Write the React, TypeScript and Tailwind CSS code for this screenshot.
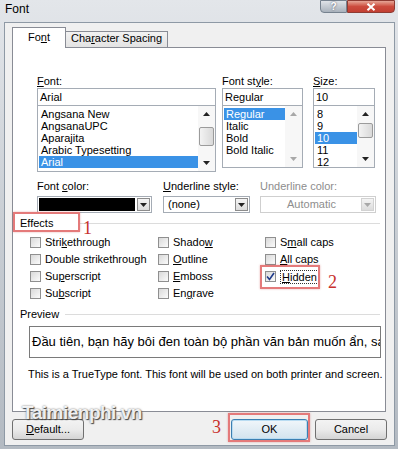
import React from "react";

const fontItems = ["Angsana New", "AngsanaUPC", "Aparajita", "Arabic Typesetting", "Arial"];
const styleItems = ["Regular", "Italic", "Bold", "Bold Italic"];
const sizeItems = ["8", "9", "10", "11", "12"];

function Tri({ up, gray }: { up?: boolean; gray?: boolean }) {
  return (
    <svg width="7" height="4" viewBox="0 0 7 4" className="block">
      <path d={up ? "M0 4 L3.5 0 L7 4 Z" : "M0 0 L7 0 L3.5 4 Z"} fill={gray ? "#a8a8a8" : "#222"} />
    </svg>
  );
}

function ScrollBar({ thumb, faded }: { thumb?: string; faded?: boolean }) {
  return (
    <div className="relative flex w-[17px] flex-col items-center justify-between bg-[#f7f7f7] py-[6px]">
      <Tri up gray={faded} />
      {thumb && (
        <div
          className={`absolute left-[1px] w-[15px] rounded-[2px] border border-[#9b9b9b] bg-gradient-to-r from-[#f3f3f3] to-[#d9d9d9] ${thumb}`}
        />
      )}
      <Tri gray={faded} />
    </div>
  );
}

function ListBox({
  items,
  selected,
  height,
  thumb,
  faded,
}: {
  items: React.ReactNode[];
  selected: number;
  height: string;
  thumb?: string;
  faded?: boolean;
}) {
  return (
    <div className={`flex border border-t-0 border-[#a5acb5] ${height}`}>
      <div className="flex-1 overflow-hidden pl-[1px] pt-[2px]">
        {items.map((it, i) => (
          <div
            key={i}
            className={`h-[12px] whitespace-nowrap px-[2px] leading-[12px] ${
              i === selected ? "bg-[#3a92e6] text-white" : ""
            }`}
          >
            {it}
          </div>
        ))}
      </div>
      <ScrollBar thumb={thumb} faded={faded} />
    </div>
  );
}

function DropBtn({ gray }: { gray?: boolean }) {
  return (
    <div
      className={`flex h-full w-[13px] items-center justify-center border bg-gradient-to-b from-[#f4f4f4] to-[#dcdcdc] ${
        gray ? "border-[#d2d2d2]" : "border-[#8c8c8c]"
      }`}
    >
      <Tri gray={gray} />
    </div>
  );
}

function Check({ label, checked }: { label: React.ReactNode; checked?: boolean }) {
  return (
    <div className="flex h-[17px] items-center">
      <div className="mr-[4px] flex h-[11px] w-[11px] items-center justify-center border border-[#8f8f8f] bg-gradient-to-br from-[#d9d9d9] to-[#fbfbfb]">
        {checked && (
          <svg width="9" height="9" viewBox="0 0 9 9">
            <path d="M1 4.5 L3.5 7.5 L8 1" fill="none" stroke="#1f3a8a" strokeWidth="1.6" />
          </svg>
        )}
      </div>
      {label}
    </div>
  );
}

function Btn({ children, w, focus }: { children: React.ReactNode; w: string; focus?: boolean }) {
  return (
    <div
      className={`flex h-[21px] items-center justify-center rounded-[3px] border bg-gradient-to-b ${w} ${
        focus
          ? "border-[#3c7fb1] from-[#f0f6fa] to-[#d3e3ee] shadow-[inset_0_0_0_1px_#b9dcf2]"
          : "border-[#707070] from-[#f3f3f3] via-[#ebebeb] to-[#d4d4d4]"
      }`}
    >
      {children}
    </div>
  );
}

export default function App() {
  return (
    <div className="relative h-[449px] w-[398px] overflow-hidden bg-gradient-to-b from-[#e3e6ea] via-[#c9ced4] to-[#b3bac2] font-['Liberation_Sans',Arial,sans-serif] text-[11px] text-black">
      {/* title bar */}
      <div className="flex h-[22px] items-start justify-between">
        <div className="pl-[5px] pt-[2px] text-[12px] leading-[14px]">Font</div>
        <div className="mr-[3px] flex">
          <div className="flex h-[13px] w-[27px] items-center justify-center rounded-bl-[4px] border border-[#76828f] bg-gradient-to-b from-[#dfe3e8] to-[#a9b2bc] text-[10px] font-bold leading-none text-white [text-shadow:0_0_2px_#445]">
            ?
          </div>
          <div className="flex h-[13px] w-[48px] items-center justify-center rounded-br-[4px] border border-[#8d3b33] bg-gradient-to-b from-[#e5a597] via-[#cc4b3e] to-[#c23f32]">
            <svg width="10" height="8" viewBox="0 0 10 8">
              <path d="M1.5 0.8 L8.5 7.2 M8.5 0.8 L1.5 7.2" stroke="#fff" strokeWidth="2" />
            </svg>
          </div>
        </div>
      </div>

      {/* dialog body */}
      <div className="ml-[4px] mr-[3px] h-[424px] border border-[#8e99a5] bg-[#f0f0f0] px-[7px] pt-[5px]">
        {/* tabs */}
        <div className="flex h-[20px] items-end">
          <div className="relative z-10 flex h-[21px] w-[54px] items-center justify-center border border-b-0 border-[#898c95] bg-white pb-[2px]">
            Fo<span className="underline">n</span>t
          </div>
          <div className="flex h-[17px] w-[102px] items-center justify-center border border-l-0 border-[#898c95] bg-gradient-to-b from-[#f2f2f2] to-[#e3e3e3] pb-[2px]">
            Cha<span className="underline">r</span>acter Spacing
          </div>
        </div>

        {/* panel */}
        <div className="relative -mt-[1px] h-[365px] w-[374px] border border-[#898c95] bg-white">
          {/* font / style / size */}
          <div className="flex pl-[24px] pt-[27px]">
            <div className="mr-[6px] w-[179px]">
              <div className="h-[13px] leading-[13px]">
                <span className="underline">F</span>ont:
              </div>
              <div className="h-[18px] border border-[#a5acb5] px-[2px] leading-[16px]">Arial</div>
              <ListBox items={fontItems} selected={4} height="h-[66px]" thumb="top-[21px] h-[19px]" />
            </div>
            <div className="mr-[10px] w-[81px]">
              <div className="h-[13px] leading-[13px]">
                Font st<span className="underline">y</span>le:
              </div>
              <div className="h-[18px] border border-[#a5acb5] px-[2px] leading-[16px]">Regular</div>
              <ListBox items={styleItems} selected={0} height="h-[62px]" faded />
            </div>
            <div className="w-[62px]">
              <div className="h-[13px] leading-[13px]">
                <span className="underline">S</span>ize:
              </div>
              <div className="h-[18px] border border-[#a5acb5] px-[2px] leading-[16px]">10</div>
              <ListBox items={sizeItems} selected={2} height="h-[62px]" thumb="top-[17px] h-[15px]" />
            </div>
          </div>

          {/* colors */}
          <div className="flex pl-[24px] pt-[8px]">
            <div className="mr-[11px] w-[115px]">
              <div className="mb-[3px] h-[13px] leading-[13px]">
                Font <span className="underline">c</span>olor:
              </div>
              <div className="flex h-[17px] items-center border border-[#a5acb5] p-[1px]">
                <div className="mr-[2px] h-full flex-1 bg-black" />
                <DropBtn />
              </div>
            </div>
            <div className="mr-[10px] w-[87px]">
              <div className="mb-[3px] h-[13px] leading-[13px]">
                <span className="underline">U</span>nderline style:
              </div>
              <div className="flex h-[17px] items-center border border-[#a5acb5] p-[1px]">
                <div className="flex-1 pl-[3px] leading-[13px]">(none)</div>
                <DropBtn />
              </div>
            </div>
            <div className="w-[116px]">
              <div className="mb-[3px] h-[13px] leading-[13px] text-[#8d8d8d]">Underline color:</div>
              <div className="flex h-[17px] items-center border border-[#cfcfcf] p-[1px]">
                <div className="flex-1 text-center leading-[13px] text-[#8d8d8d]">Automatic</div>
                <DropBtn gray />
              </div>
            </div>
          </div>

          {/* effects */}
          <div className="mt-[3px] flex h-[14px] items-center pl-[7px] pr-[5px]">
            <span>Effects</span>
            <div className="ml-[26px] h-px flex-1 bg-[#dcdcdc]" />
          </div>
          <div className="mt-[4px] grid grid-cols-[128px_107px_1fr] pl-[17px]">
            <Check label={<span>Stri<span className="underline">k</span>ethrough</span>} />
            <Check label={<span>Shado<span className="underline">w</span></span>} />
            <Check label={<span>S<span className="underline">m</span>all caps</span>} />
            <Check label={<span>Double strikethrough</span>} />
            <Check label={<span><span className="underline">O</span>utline</span>} />
            <Check label={<span><span className="underline">A</span>ll caps</span>} />
            <Check label={<span>Su<span className="underline">p</span>erscript</span>} />
            <Check label={<span><span className="underline">E</span>mboss</span>} />
            <Check
              checked
              label={
                <span className="border border-dotted border-[#333] px-[1px] leading-[12px]">
                  <span className="underline">H</span>idden
                </span>
              }
            />
            <Check label={<span>Su<span className="underline">b</span>script</span>} />
            <Check label={<span>En<span className="underline">g</span>rave</span>} />
            <div />
          </div>

          {/* preview */}
          <div className="mt-[5px] flex h-[14px] items-center pl-[7px] pr-[5px]">
            <span>Preview</span>
            <div className="ml-[6px] h-px flex-1 bg-[#dcdcdc]" />
          </div>
          <div className="ml-[16px] mr-[4px] mt-[5px] h-[32px] overflow-hidden whitespace-nowrap border border-[#7a7a7a] pl-[2px] text-[13px] leading-[30px]">
            Đầu tiên, bạn hãy bôi đen toàn bộ phần văn bản muốn ẩn, sau đó
          </div>
          <div className="mt-[9px] h-[14px] whitespace-nowrap pl-[15px] pr-[4px] text-center leading-[14px]">
            This is a TrueType font. This font will be used on both printer and screen.
          </div>
        </div>

        {/* buttons */}
        <div className="mt-[7px] flex">
          <Btn w="w-[72px]">
            <span>
              <span className="underline">D</span>efault...
            </span>
          </Btn>
          <div className="flex-1" />
          <Btn w="w-[77px]" focus>
            OK
          </Btn>
          <div className="w-[7px]" />
          <Btn w="w-[72px]">Cancel</Btn>
        </div>
      </div>

      {/* watermark */}
      <div className="pointer-events-none absolute left-[22px] top-[403px] text-[19px] font-bold leading-none tracking-[-0.5px] text-white/90 [text-shadow:1px_1px_1px_#444,0_0_2px_#666]">
        Taimienphi.vn
      </div>

      {/* annotations */}
      <div className="pointer-events-none absolute left-[13px] top-[212px] h-[20px] w-[67px] border-2 border-[#e47a7a] shadow-[0_0_2px_rgba(190,40,40,0.35)]" />
      <div className="pointer-events-none absolute left-[83px] top-[219px] font-['Liberation_Serif',serif] text-[18px] leading-[18px] text-[#c8302c]">
        1
      </div>
      <div className="pointer-events-none absolute left-[260px] top-[265px] h-[24px] w-[60px] border-2 border-[#e47a7a] shadow-[0_0_2px_rgba(190,40,40,0.35)]" />
      <div className="pointer-events-none absolute left-[328px] top-[273px] font-['Liberation_Serif',serif] text-[18px] leading-[18px] text-[#c8302c]">
        2
      </div>
      <div className="pointer-events-none absolute left-[228px] top-[413px] h-[29px] w-[82px] border-2 border-[#e47a7a] shadow-[0_0_2px_rgba(190,40,40,0.35)]" />
      <div className="pointer-events-none absolute left-[212px] top-[418px] font-['Liberation_Serif',serif] text-[18px] leading-[18px] text-[#c8302c]">
        3
      </div>
    </div>
  );
}
